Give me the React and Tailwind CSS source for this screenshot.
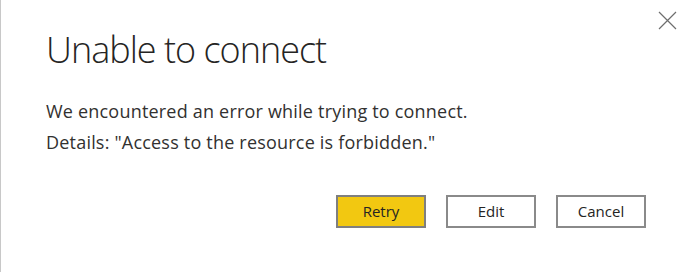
import React from "react";

export default function App() {
  return (
    <div
      className="relative w-[690px] h-[272px] bg-white border-l border-[#c8c8c8] text-[#252423]"
      style={{ fontFamily: '"Open Sans", "Noto Sans", sans-serif' }}
    >
      <button className="absolute left-[656px] top-[10px] w-[20px] h-[20px] flex items-center justify-center">
        <svg width="19" height="19" viewBox="0 0 19 19" fill="none" stroke="#6e6e6e" strokeWidth="1.2">
          <path d="M1 1 L18 18 M18 1 L1 18" />
        </svg>
      </button>
      <div className="pl-[45px] pt-[26px]">
        <h1 className="text-[36px] font-light leading-[48px] tracking-[-1px]">Unable to connect</h1>
        <div className="mt-[22px] text-[18px] leading-[31px] tracking-[0.2px] text-[#323130]">
          <p>We encountered an error while trying to connect.</p>
          <p>Details: "Access to the resource is forbidden."</p>
        </div>
      </div>
      <div className="flex justify-end gap-[20px] pr-[44px] mt-[37px]">
        <button className="w-[90px] h-[33px] border-2 border-[#7f7f7f] bg-[#f2c811] text-[15px] text-[#252423]">
          Retry
        </button>
        <button className="w-[90px] h-[33px] border-2 border-[#8a8a8a] bg-white text-[15px] text-[#252423]">
          Edit
        </button>
        <button className="w-[90px] h-[33px] border-2 border-[#8a8a8a] bg-white text-[15px] text-[#252423]">
          Cancel
        </button>
      </div>
    </div>
  );
}
